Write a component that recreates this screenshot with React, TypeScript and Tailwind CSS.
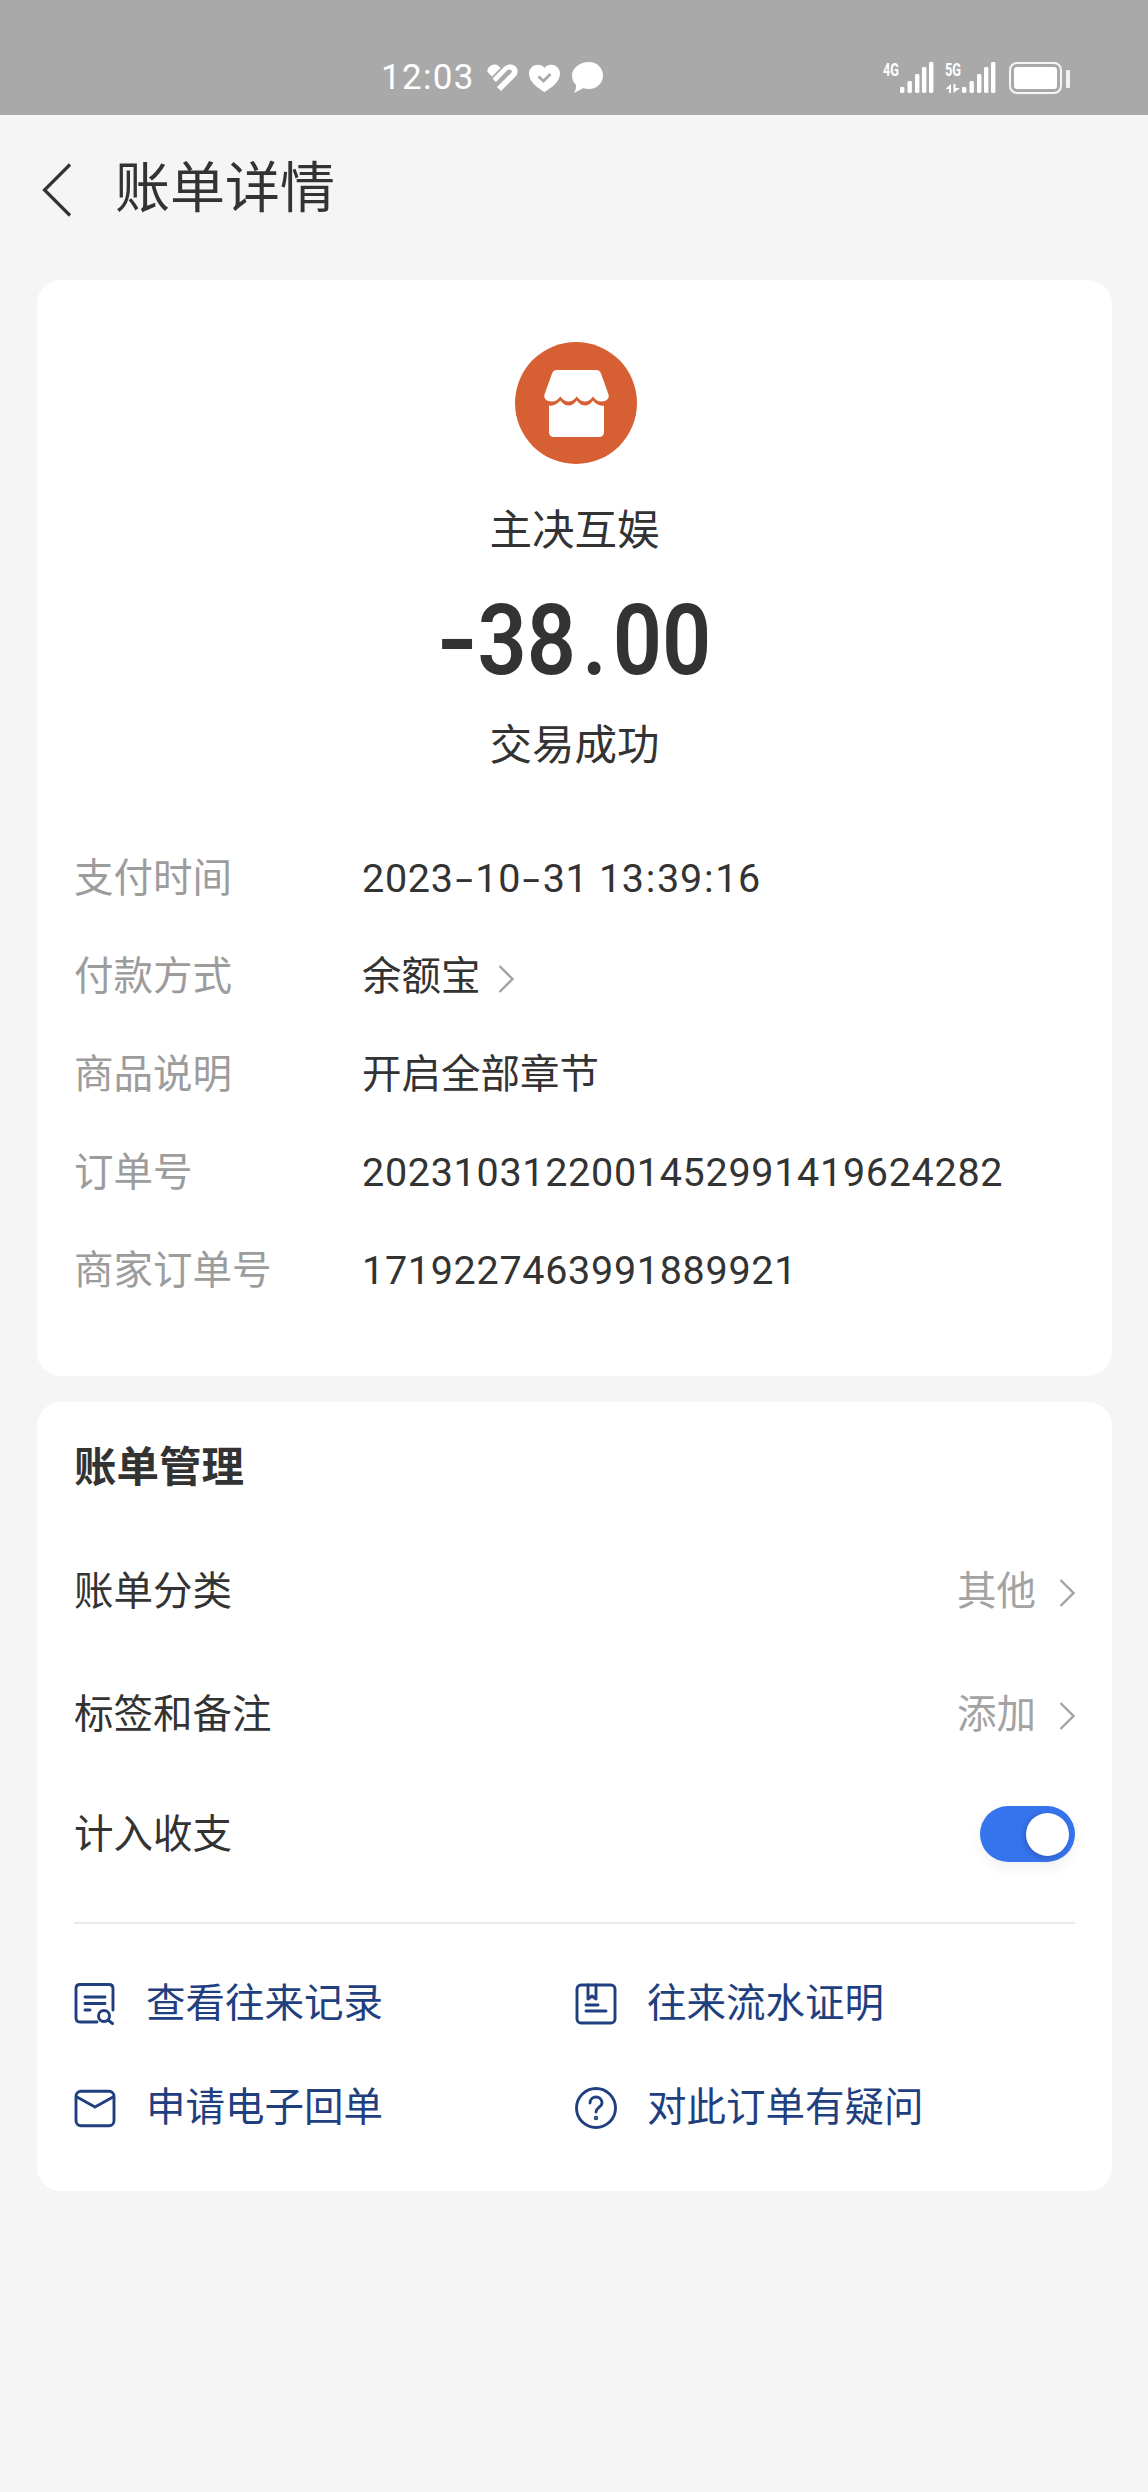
import type { ReactNode } from 'react'

const FONT = 'font-["Roboto","Noto_Sans_CJK_SC",sans-serif]'

const Sep = ({ children, className }: { children: string; className: string }) => (
  <span className={className}>{children}</span>
)

const DETAILS: { label: string; value: ReactNode; arrow?: boolean; digits?: boolean }[] = [
  {
    label: '支付时间',
    digits: true,
    value: (
      <>
        2023<Sep className="inline-block scale-x-[1.6] mx-[5px]">-</Sep>10<Sep className="inline-block scale-x-[1.6] mx-[5px]">-</Sep>31 13
        <Sep className="mx-[1px]">:</Sep>39<Sep className="mx-[1px]">:</Sep>16
      </>
    ),
  },
  { label: '付款方式', value: '余额宝', arrow: true },
  { label: '商品说明', value: '开启全部章节' },
  { label: '订单号', value: '2023103122001452991419624282', digits: true },
  { label: '商家订单号', value: '1719227463991889921', digits: true },
]

function Chevron({ className }: { className: string }) {
  return (
    <svg viewBox="0 0 16 28" className={className} fill="none" stroke="#a3a3a3" strokeWidth="2.4">
      <path d="M1.5 1l13 13-13 13" />
    </svg>
  )
}

const BARS = [
  { x: 17, y: 25 },
  { x: 24.5, y: 19 },
  { x: 32, y: 12 },
  { x: 39, y: 5 },
  { x: 46, y: 0 },
]

function Signal({ label, arrows }: { label: string; arrows?: boolean }) {
  return (
    <svg viewBox="0 -4 51 35" className="w-[51px] h-[35px]" fill="#fff">
      <text x="0" y="14" fontFamily="Roboto" fontSize="18" fontWeight="700" textLength="16" lengthAdjust="spacingAndGlyphs">{label}</text>
      {arrows && <path d="M6 22v9H4v-4H.5zM8.500 22h2v4H15l-6.500 5z" />}
      {BARS.map((b) => (
        <rect key={b.x} x={b.x} y={b.y} width="4.400" height={31 - b.y} rx="1.400" />
      ))}
    </svg>
  )
}

function StatusBar() {
  return (
    <div className="h-[115px] bg-[#a9a9a9] flex items-start pt-[60px] pl-[381px] pr-[78px]">
      <span className="text-[35px] leading-[36px] tracking-[1.3px] text-white">12:03</span>
      <svg viewBox="0 0 32 27" className="w-[32px] h-[27px] ml-[11px] mt-[4px]" fill="#fff">
        <path d="M2 4.500C4 1 9-.5 12 1.500L14.500 4 6 12.500 2.500 9C1 7.500 1 6 2 4.500z" />
        <path d="M18 3c4-3.500 10-3.500 12 0 2.500 3 2 7-.5 9.500L15 27l-4-4 14.500-14.500c1.500-2-1.500-4-4-2.500L10 18l-3.500-3.500z" />
      </svg>
      <svg viewBox="0 0 31 28" className="w-[31px] h-[28px] ml-[11px] mt-[4px]">
        <path d="M15.500 28C9 24 0 18 0 9.500 0 1 11-2.500 15.500 4 20-2.500 31 1 31 9.500 31 18 22 24 15.500 28z" fill="#fff" />
        <path d="M9.500 12.500l5 4.500 7-7" fill="none" stroke="#a9a9a9" strokeWidth="2.800" />
      </svg>
      <svg viewBox="0 0 31 31" className="w-[31px] h-[31px] ml-[12px] mt-[2px]" fill="#fff">
        <path d="M17 0c8 0 14 6 14 13.500S25 27 17 27c-2 0-4-.3-5.500-1L2 31c1.500-2.500 2.200-5 2-8C1.500 20.500 0 17 0 13.500 0 6 8 0 17 0z" />
      </svg>
      <div className="flex-1" />
      <div className="flex gap-[11px] mt-[-2px]">
        <Signal label="4G" />
        <Signal label="5G" arrows />
      </div>
      <div className="ml-[13px] mt-[2px] w-[53px] h-[32px] rounded-[8px] border-[2.500px] border-white/90 p-[3px]">
        <div className="w-full h-full rounded-[3px] bg-white" />
      </div>
      <div className="ml-[4px] mt-[10px] w-[4px] h-[18px] rounded-[1px] bg-white/85" />
    </div>
  )
}

function StoreIcon() {
  return (
    <div className="pl-[3px]">
      <div className="mx-auto w-[122px] h-[122px] rounded-full bg-[#d66033] flex items-center justify-center">
        <svg viewBox="0 0 65 67" className="w-[65px] h-[67px]" fill="#fff">
          <path d="M13 0H52c2.500 0 4 1 5 3.500l7.500 21c1 4-2 7-7.500 7-3 0-6-2-8-5-2 3-5 5-8 5s-6-2-8.250-5c-2.250 3-5.250 5-8.250 5s-6-2-8.250-5c-2 3-5 5-8.250 5-5.500 0-8.500-3-7.500-7L8 3.500C9 1 10.500 0 13 0z" />
          <path d="M5 35.500c4 .8 8-1 11.250-5 2.500 3 5 5 8.250 5s6-2 8.250-5c2.250 3 5 5 8.250 5s6-2 8-5c3 4 7 5.800 11 5V62c0 3-2 5-5 5H10c-3 0-5-2-5-5z" />
        </svg>
      </div>
    </div>
  )
}

function InfoRow({ label, value, arrow, digits }: { label: string; value: ReactNode; arrow?: boolean; digits?: boolean }) {
  return (
    <div className="h-[98px] flex items-center text-[39.500px] leading-[60px]">
      <span className="w-[288px] text-[#9c9c9c]">{label}</span>
      <span className={digits ? 'text-[#333333] tracking-[0.7px] whitespace-pre' : 'text-[#333333]'}>{value}</span>
      {arrow && <Chevron className="w-[16px] h-[28px] ml-[17px] mt-[4px]" />}
    </div>
  )
}

function ManageRow({ label, value }: { label: string; value: string }) {
  return (
    <div className="h-[120px] flex items-center text-[39.500px] leading-[60px]">
      <span className="flex-1 text-[#333333]">{label}</span>
      <span className="text-[#a3a3a3]">{value}</span>
      <Chevron className="w-[16px] h-[28px] ml-[23px] mt-[1px]" />
    </div>
  )
}

function LinkItem({ icon, label }: { icon: ReactNode; label: string }) {
  return (
    <div className="h-[104px] flex items-center">
      {icon}
      <span className="ml-[30px] text-[39.500px] leading-[60px] text-[#1f3f7f]">{label}</span>
    </div>
  )
}

const iconProps = {
  viewBox: '0 0 42 42',
  className: 'w-[42px] h-[42px]',
  fill: 'none',
  stroke: '#1f3f7f',
  strokeWidth: 2.9,
  strokeLinecap: 'round' as const,
  strokeLinejoin: 'round' as const,
}

const RecordIcon = (
  <svg {...iconProps}>
    <path d="M23 39H6c-2.500 0-4-1.500-4-4V5.500c0-2.500 1.500-4 4-4h29c2.500 0 4 1.500 4 4V27" />
    <path d="M11 14h20M11 20.500h20M11 27h5" />
    <circle cx="30" cy="33" r="5.500" />
    <path d="M34 37l4.500 3.500" />
  </svg>
)

const MailIcon = (
  <svg {...iconProps}>
    <rect x="2" y="4.300" width="38" height="34.400" rx="5" />
    <path d="M3 10l18 10 18-10" />
  </svg>
)

const ProofIcon = (
  <svg {...iconProps}>
    <rect x="2" y="2" width="38" height="38" rx="4" />
    <path d="M13 2v14l4-3 4 3V2M11 22h12M11 28h20" />
  </svg>
)

const QuestionIcon = (
  <svg {...iconProps}>
    <circle cx="21" cy="21" r="19.500" />
    <path d="M15 16c0-4 3-6 6-6s6 2 6 6c0 4-6 4.500-6 9" />
    <circle cx="21" cy="31" r="0.800" fill="#1f3f7f" />
  </svg>
)

export default function App() {
  return (
    <div className={`${FONT} min-h-[2492px] bg-[#f5f5f5]`}>
      <StatusBar />

      {/* Header */}
      <div className="h-[145px] flex items-center pl-[41px]">
        <svg viewBox="0 0 30 54" className="w-[32px] h-[54px] mt-[4px]" fill="none" stroke="#333333" strokeWidth="3.200">
          <path d="M28 1.500L2.500 27 28 52.500" />
        </svg>
        <h1 className="ml-[42px] text-[55px] leading-[60px] font-normal text-[#333333]">账单详情</h1>
      </div>

      <div className="ml-[37px] mr-[36px] mt-[20px] flex flex-col gap-[26px]">
        {/* Summary */}
        <div className="bg-white rounded-[24px] pt-[62px] pb-[56px] px-[37px]">
          <StoreIcon />
          <div className="mt-[37px] text-center text-[42.500px] leading-[60px] text-[#333333]">主决互娱</div>
          <div className="mt-[25px] pl-[3px] text-center text-[98px] leading-[110px] font-semibold text-[#333333]">
            <span className="inline-block scale-x-[0.88]">
              <span className="inline-block scale-x-[1.3] mr-[5px]">-</span>38<span className="mx-[7px]">.</span>00
            </span>
          </div>
          <div className="mt-[20px] text-center text-[42.500px] leading-[60px] text-[#333333]">交易成功</div>
          <div className="mt-[54px]">
            {DETAILS.map((row) => (
              <InfoRow key={row.label} {...row} />
            ))}
          </div>
        </div>

        {/* Bill management */}
        <div className="bg-white rounded-[24px] pt-[36px] pb-[31px] pl-[37px] pr-[37px]">
          <div className="h-[60px] flex items-center text-[42.500px] font-bold text-[#333333]">账单管理</div>
          <div className="mt-[34px]">
            <ManageRow label="账单分类" value="其他" />
            <div className="mt-[3px]">
              <ManageRow label="标签和备注" value="添加" />
            </div>
            <div className="h-[120px] flex items-center justify-between text-[39.500px] leading-[60px] text-[#333333]">
              <span>计入收支</span>
              <div className="w-[95px] h-[56px] mb-[2px] rounded-full bg-[#3674ee] flex items-center justify-end pr-[6px] shadow-[0_6px_14px_rgba(0,0,0,0.06)]">
                <div className="w-[43px] h-[43px] rounded-full bg-white shadow-[-2px_2px_6px_rgba(0,0,0,0.2)]" />
              </div>
            </div>
          </div>
          <div className="mt-[27px] h-[2px] bg-[#e9e9e9]" />
          <div className="mt-[28px] grid grid-cols-[501px_1fr]">
            <LinkItem icon={RecordIcon} label="查看往来记录" />
            <LinkItem icon={ProofIcon} label="往来流水证明" />
            <LinkItem icon={MailIcon} label="申请电子回单" />
            <LinkItem icon={QuestionIcon} label="对此订单有疑问" />
          </div>
        </div>
      </div>
    </div>
  )
}
